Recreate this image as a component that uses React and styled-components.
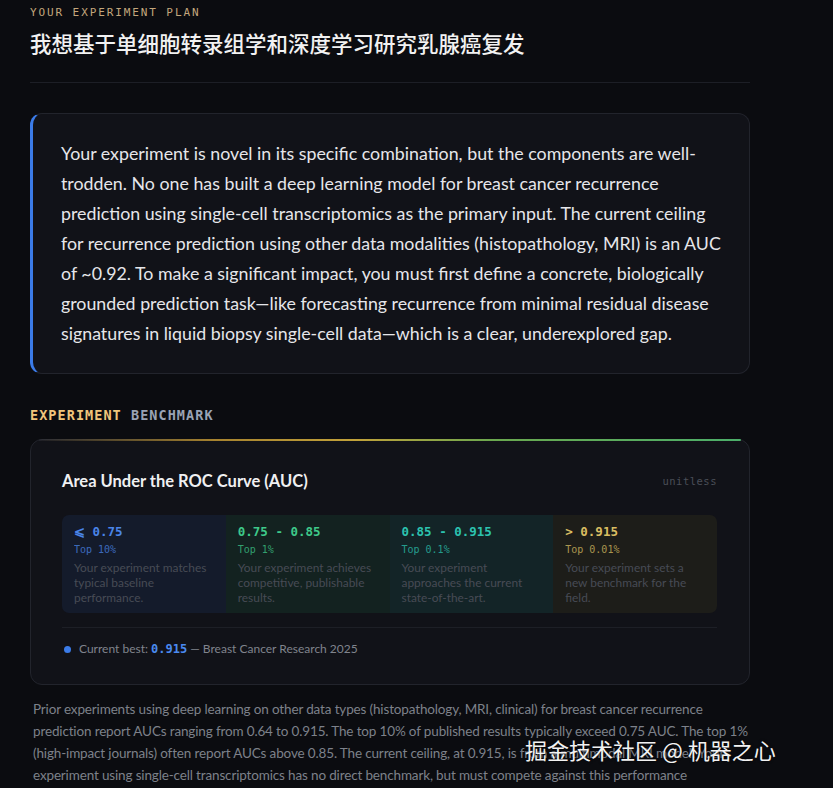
import React from 'react';
import styled, { createGlobalStyle } from 'styled-components';

const GlobalStyle = createGlobalStyle`
  html, body {
    margin: 0;
    padding: 0;
    background: #0b0c10;
  }
  body {
    font-family: Lato, "Noto Sans", "Noto Sans CJK SC", sans-serif;
    color: #e4e4e7;
  }
`;

const mono = `"DejaVu Sans Mono", "Liberation Mono", monospace`;

const Page = styled.div`
  position: relative;
  width: 750px;
  height: 788px;
  overflow: hidden;
  padding: 6px 0 0 30px;
  box-sizing: border-box;
`;

const Eyebrow = styled.div`
  font-family: ${mono};
  font-size: 11px;
  letter-spacing: 1.9px;
  color: #c3a77c;
  line-height: 14px;
`;

const Title = styled.h1`
  margin: 8px 0 0;
  font-family: "Noto Sans CJK SC", sans-serif;
  font-weight: 500;
  font-size: 21.5px;
  line-height: 30px;
  color: #f2f2f2;
`;

const Divider = styled.hr`
  border: none;
  height: 1px;
  background: #1d1f26;
  margin: ${p => p.$margin || '24px 0 0'};
`;

const Summary = styled.div`
  margin-top: 30px;
  background: #111218;
  border: 1px solid #22242c;
  border-left: 3px solid #3b7be8;
  border-radius: 12px;
  padding: 24px 22px 25px 28px;
  font-size: 17.8px;
  line-height: 30px;
  color: #e6e6ea;
`;

const SectionLabel = styled.div`
  margin-top: 32px;
  font-family: ${mono};
  font-weight: 700;
  font-size: 13.5px;
  letter-spacing: 1.05px;
  line-height: 18px;
`;

const LabelPart = styled.span`
  color: ${p => p.$color};
`;

const BenchCard = styled.div`
  position: relative;
  margin-top: 15px;
  background: #111218;
  border: 1px solid #22242c;
  border-radius: 12px;
  padding: 30px 32px 27px 31px;

  &::before {
    content: '';
    position: absolute;
    top: -1px;
    left: 8px;
    right: 8px;
    height: 2px;
    border-radius: 2px;
    background: linear-gradient(90deg, rgba(80, 80, 90, 0.2) 0%, #a7832f 25%, #c2a23a 45%, #6aa84f 65%, #4caf6a 100%);
  }
`;

const CardHead = styled.div`
  display: flex;
  justify-content: space-between;
  align-items: center;
`;

const MetricName = styled.div`
  font-size: 16.5px;
  font-weight: 700;
  color: #f0f0f2;
  line-height: 22px;
`;

const Unit = styled.div`
  font-family: ${mono};
  font-size: 10.5px;
  letter-spacing: 0.5px;
  color: #4a4e57;
`;

const Tiers = styled.div`
  margin-top: 23px;
  display: grid;
  grid-template-columns: repeat(4, 1fr);
  border-radius: 7px;
  overflow: hidden;
`;

const Tier = styled.div`
  background: ${p => p.$bg};
  padding: 9px 12px 8px;
`;

const Range = styled.div`
  font-family: ${mono};
  font-weight: 700;
  font-size: 12.5px;
  line-height: 16px;
  color: ${p => p.$color};
`;

const Rank = styled.div`
  margin-top: 3px;
  font-family: ${mono};
  font-size: 10px;
  line-height: 14px;
  color: ${p => p.$color};
  opacity: 0.75;
`;

const TierText = styled.div`
  margin-top: 3px;
  font-size: 11.9px;
  line-height: 15px;
  color: #474b55;
`;

const Best = styled.div`
  display: flex;
  align-items: center;
  gap: 8px;
  margin-top: 13px;
  padding-left: 2px;
  font-size: 12px;
  color: #80848d;
  line-height: 16px;
`;

const Dot = styled.span`
  width: 7px;
  height: 7px;
  border-radius: 50%;
  background: #3b7be8;
`;

const BestValue = styled.span`
  font-family: ${mono};
  font-weight: 700;
  color: #4a8af0;
`;

const Notes = styled.p`
  margin: 13px 0 0 3px;
  font-size: 13.5px;
  line-height: 22px;
  color: #7d818a;
  letter-spacing: -0.15px;
`;

const Watermark = styled.div`
  position: absolute;
  left: 525px;
  top: 734px;
  font-family: "Noto Sans CJK SC", sans-serif;
  font-size: 22px;
  line-height: 30px;
  color: #f2f2f2;
  text-shadow: 0 0 3px rgba(0, 0, 0, 0.8);
  white-space: nowrap;
`;

const tiers = [
  { range: '⩽ 0.75', rank: 'Top 10%', text: 'Your experiment matches typical baseline performance.', color: '#4a85e8', bg: '#141b2b' },
  { range: '0.75 - 0.85', rank: 'Top 1%', text: 'Your experiment achieves competitive, publishable results.', color: '#3ec98a', bg: '#132220' },
  { range: '0.85 - 0.915', rank: 'Top 0.1%', text: 'Your experiment approaches the current state-of-the-art.', color: '#2cc3b0', bg: '#132427' },
  { range: '> 0.915', rank: 'Top 0.01%', text: 'Your experiment sets a new benchmark for the field.', color: '#d9bd62', bg: '#1d1d19' },
];

export default function App() {
  return (
    <>
      <GlobalStyle />
      <Page>
        <Eyebrow>YOUR EXPERIMENT PLAN</Eyebrow>
        <Title>我想基于单细胞转录组学和深度学习研究乳腺癌复发</Title>
        <Divider />
        <Summary>
          Your experiment is novel in its specific combination, but the components are well-trodden. No one has built a deep learning model for breast cancer recurrence prediction using single-cell transcriptomics as the primary input. The current ceiling for recurrence prediction using other data modalities (histopathology, MRI) is an AUC of ~0.92. To make a significant impact, you must first define a concrete, biologically grounded prediction task—like forecasting recurrence from minimal residual disease signatures in liquid biopsy single-cell data—which is a clear, underexplored gap.
        </Summary>
        <SectionLabel>
          <LabelPart $color="#f0c57c">EXPERIMENT</LabelPart>{' '}
          <LabelPart $color="#9aa3b5">BENCHMARK</LabelPart>
        </SectionLabel>
        <BenchCard>
          <CardHead>
            <MetricName>Area Under the ROC Curve (AUC)</MetricName>
            <Unit>unitless</Unit>
          </CardHead>
          <Tiers>
            {tiers.map(t => (
              <Tier key={t.range} $bg={t.bg}>
                <Range $color={t.color}>{t.range}</Range>
                <Rank $color={t.color}>{t.rank}</Rank>
                <TierText>{t.text}</TierText>
              </Tier>
            ))}
          </Tiers>
          <Divider $margin="14px 0 0" />
          <Best>
            <Dot />
            <span>Current best: <BestValue>0.915</BestValue> — Breast Cancer Research 2025</span>
          </Best>
        </BenchCard>
        <Notes>
          Prior experiments using deep learning on other data types (histopathology, MRI, clinical) for breast cancer recurrence prediction report AUCs ranging from 0.64 to 0.915. The top 10% of published results typically exceed 0.75 AUC. The top 1% (high-impact journals) often report AUCs above 0.85. The current ceiling, at 0.915, is from a multimodal MRI model. Your experiment using single-cell transcriptomics has no direct benchmark, but must compete against this performance benchmark.
        </Notes>
      </Page>
      <Watermark>掘金技术社区 @ 机器之心</Watermark>
    </>
  );
}
